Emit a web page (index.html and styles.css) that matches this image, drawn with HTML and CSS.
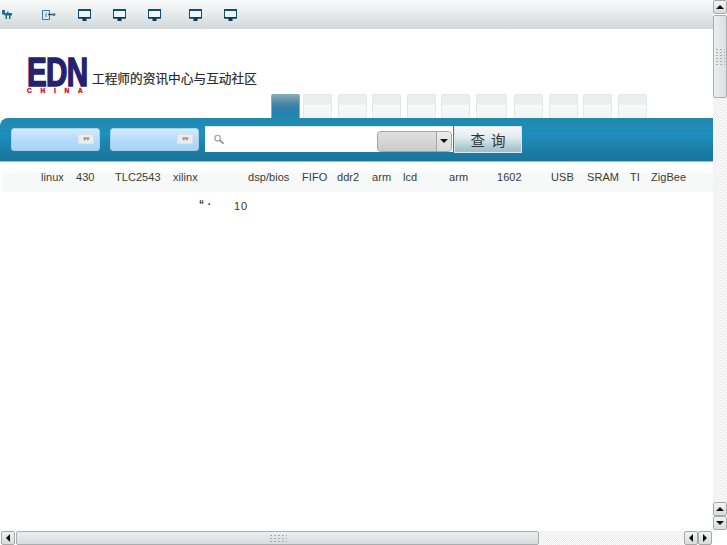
FILE: index.html
```html
<!DOCTYPE html>
<html lang="zh">
<head>
<meta charset="utf-8">
<title>EDN China</title>
<link rel="stylesheet" href="styles.css">
</head>
<body>
<svg class="defs" width="0" height="0" aria-hidden="true">
  <symbol id="monitor" viewBox="0 0 13 12">
    <path d="M0.5 0.5H12.5V9H0.5Z" fill="#f0f5f8" stroke="#0d4f78"/>
    <path d="M0 0H13V2H0Z" fill="#0d4f78"/>
    <path d="M0 8H13V9.5H8.5V12H4.5V9.5H0Z" fill="#0d3a58"/>
  </symbol>
</svg>
<div class="window">
  <div class="view">
    <div class="toolbar">
      <svg class="tool tool-first" viewBox="0 0 10 9"><path d="M0 0H3V3H5V1.5H6.5V3H10V5.5H8.5V9H7V5.5H5V9H3.5V5.5H2.5V4.5H0Z" fill="#1f6a8e"/></svg>
      <svg class="tool tool-door" viewBox="0 0 14 10"><path d="M0.5 0.5H7.5V9.5H0.5Z" fill="#dfe9f2" stroke="#3b78ad"/><path d="M3 3H5V7H3Z" fill="#8fb4d2"/><path d="M6 4.5H11" stroke="#33546e" stroke-width="1.4"/><circle cx="12" cy="4.5" r="1.6" fill="#4a7c9e"/></svg>
      <svg class="tool tool-pc" viewBox="0 0 13 12"><use href="#monitor"/></svg>
      <svg class="tool tool-pc" viewBox="0 0 13 12"><use href="#monitor"/></svg>
      <svg class="tool tool-pc" viewBox="0 0 13 12"><use href="#monitor"/></svg>
      <svg class="tool tool-pc tool-far" viewBox="0 0 13 12"><use href="#monitor"/></svg>
      <svg class="tool tool-pc" viewBox="0 0 13 12"><use href="#monitor"/></svg>
    </div>
    <div class="masthead">
      <div class="brand">
        <div class="logo">
          <span class="logo-edn">EDN</span>
          <span class="logo-china">CHINA</span>
        </div>
        <span class="slogan">工程师的资讯中心与互动社区</span>
      </div>
      <div class="tabs">
        <span class="tab tab-active"></span>
        <span class="tab"></span>
        <span class="tab"></span>
        <span class="tab"></span>
        <span class="tab"></span>
        <span class="tab"></span>
        <span class="tab tab-wide"></span>
        <span class="tab"></span>
        <span class="tab"></span>
        <span class="tab"></span>
        <span class="tab"></span>
      </div>
    </div>
    <div class="searchbar">
      <div class="pick"><span class="pick-arrows">▾▾</span></div>
      <div class="pick"><span class="pick-arrows">▾▾</span></div>
      <div class="field">
        <svg class="lens" viewBox="0 0 12 12"><circle cx="4.5" cy="4.5" r="3" fill="#fff" stroke="#a4a8aa" stroke-width="1.4"/><path d="M7 7L11 10.5" stroke="#8b8f92" stroke-width="2"/></svg>
        <div class="combo"><span class="combo-btn"><i class="tri-down"></i></span></div>
      </div>
      <button class="go" type="button">查 询</button>
    </div>
    <div class="keywords">
      <span>linux</span><span>430</span><span>TLC2543</span><span>xilinx</span><span>dsp/bios</span><span>FIFO</span><span>ddr2</span><span>arm</span><span>lcd</span><span>arm</span><span>1602</span><span>USB</span><span>SRAM</span><span>TI</span><span>ZigBee</span>
    </div>
    <div class="result"><span class="marks">“ ·</span><span class="count">10</span></div>
  </div>
  <div class="vbar">
    <span class="sbtn"><i class="tri-up"></i></span>
    <span class="vthumb"><span class="grip grip-v"></span></span>
    <span class="vtrough"></span>
    <span class="sbtn"><i class="tri-up"></i></span>
    <span class="sbtn"><i class="tri-down"></i></span>
  </div>
  <div class="hbar">
    <span class="sbtn"><i class="tri-left"></i></span>
    <span class="hthumb"><span class="grip grip-h"></span></span>
    <span class="htrough"></span>
    <span class="sbtn"><i class="tri-left"></i></span>
    <span class="sbtn"><i class="tri-right"></i></span>
  </div>
  <div class="corner"></div>
</div>
</body>
</html>
```
FILE: styles.css
```css
* { box-sizing: border-box; }
html, body { margin: 0; padding: 0; background: #fff; overflow: hidden; }
body { font-family: "Liberation Sans", "Noto Sans CJK SC", sans-serif; color: #333; }
.defs { position: absolute; }

.window {
  width: 727px; height: 545px;
  display: grid;
  grid-template-columns: 713px 14px;
  grid-template-rows: 530px 15px;
}
.view { overflow: hidden; background: #fff; }

.toolbar {
  height: 29px;
  display: flex; align-items: center;
  padding: 0 0 0 2px;
  background: linear-gradient(#f7f9f9 0, #eff2f2 30%, #dde2e3 70%, #d3d9da 100%);
}
.tool { display: block; flex: none; }
.tool-first { width: 10px; height: 9px; }
.tool-door { width: 14px; height: 10px; margin-left: 30px; }
.tool-pc { width: 13px; height: 12px; margin-left: 22px; }
.tool-far { margin-left: 28px; }

.masthead { height: 89px; position: relative; }
.brand { display: flex; align-items: flex-end; padding: 29px 0 0 27px; }
.logo { width: 60px; flex: none; display: flex; flex-direction: column; }
.logo-edn {
  height: 29px; font: 700 40px/29px "Liberation Sans", sans-serif;
  color: #27206a; letter-spacing: -1px; -webkit-text-stroke: 1.5px #27206a;
  transform: scaleX(.74); transform-origin: left center; white-space: nowrap;
}
.logo-china {
  height: 7px; font: 700 6.5px/7px "Liberation Sans", sans-serif;
  color: #d8102e; letter-spacing: 8.8px; -webkit-text-stroke: .4px #d8102e; white-space: nowrap;
}
.slogan {
  margin-left: 5px; margin-bottom: 9px;
  font: 12.7px/15px "Noto Sans CJK SC", sans-serif; color: #2a2a2a; -webkit-text-stroke: .2px #2a2a2a; white-space: nowrap;
}
.tabs { position: absolute; left: 271px; bottom: 0; display: flex; gap: 5.6px; height: 24px; }
.tab {
  width: 29px; height: 24px;
  border: 1px solid #e4e8e8; border-bottom: 0; border-radius: 2px 2px 0 0;
  background: linear-gradient(#eceeee 0, #eceeee 40%, #f8faf9 45%, #f1f4f3 100%);
}
.tab-active {
  width: 29px; border-color: #7fb0c6;
  background: linear-gradient(#86a9ba 0, #4f89a8 35%, #2d80aa 60%, #1f85b8 100%);
  margin-right: -2.6px;
}
.tab-wide { width: 31px; margin-right: 1.5px; }

.searchbar {
  height: 44px;
  display: flex; align-items: center;
  padding: 0 0 1px 11px;
  background: linear-gradient(#2088ad 0, #1f8fbd 35%, #1b7ea6 75%, #19749c 100%);
  border-top-left-radius: 8px;
  border-bottom: 1px solid #a8b8bf;
}
.pick {
  width: 89px; height: 23px; flex: none; margin-right: 10px;
  display: flex; align-items: center; justify-content: flex-end; padding-right: 5px;
  border-radius: 3px;
  background: linear-gradient(#d3ebfd 0, #b4dbfa 55%, #a5d3f6 100%);
  border: 1px solid #a9cfe2;
}
.pick + .pick { margin-right: 6px; }
.pick-arrows {
  width: 16px; height: 10px; border-radius: 2px; background: #eceeee;
  font-size: 7px; line-height: 10px; text-align: center; color: #8a9094; letter-spacing: -1px;
  box-shadow: inset 0 0 0 1px #dfe3e4;
}
.field {
  width: 248px; height: 26px; flex: none;
  display: flex; align-items: center; justify-content: space-between;
  padding: 3px 1px 0 8px;
  background: #fff; border-top: 1px solid #dfe6ea;
}
.lens { width: 12px; height: 11px; flex: none; margin-top: -3px; }
.combo {
  width: 75px; height: 21px;
  display: flex; justify-content: flex-end;
  border: 1px solid #a4a4a4; border-radius: 4px;
  background: linear-gradient(#dfdfdf, #d4d4d4 60%, #cbcbcb);
}
.combo-btn { width: 15px; display: flex; align-items: center; justify-content: center; border-left: 1px solid #a4a4a4; background: linear-gradient(#ececec, #dadada); border-radius: 0 3px 3px 0; }
.go {
  width: 68px; height: 27px; flex: none; margin-left: 1px; padding: 0;
  border: 1px solid #dce7ea; border-radius: 0;
  background: linear-gradient(#f7f9f9 0, #e3ecee 40%, #a9c8d3 85%, #9dc1ce 100%);
  font: 14.5px/25px "Noto Sans CJK SC", sans-serif; color: #333; word-spacing: 3px;
}

.keywords {
  margin: 1px 0 0 2px; height: 29px; padding: 0 0 0 39px;
  display: grid; align-items: center;
  grid-template-columns: 35px 39px 58px 75px 54px 35px 35px 31px 46px 48px 54px 36px 43px 21px auto;
  background: linear-gradient(#fff 0, #fff 9px, #f6f9f8 10px);
  font-size: 11px; line-height: 13px; color: #3a3a3a; letter-spacing: .05px;
}
.result {
  display: flex; align-items: baseline;
  padding: 8px 0 0 199px;
  font-size: 11px; line-height: 13px; color: #333;
}
.marks { width: 35px; white-space: pre; word-spacing: 1px; font-size: 10px; font-weight: 700; color: #222; position: relative; top: -2px; }
.count { letter-spacing: 1px; }

.vbar { display: flex; flex-direction: column; }
.sbtn {
  width: 14px; height: 14px; flex: none;
  display: flex; align-items: center; justify-content: center;
  border: 1px solid #a9a9a9; border-radius: 2px;
  background: linear-gradient(#f2f3f3, #d9dcdc);
}
.vthumb, .hthumb {
  display: flex; align-items: center; justify-content: center;
  border: 1px solid #a9adad; border-radius: 2px; flex: none;
}
.vthumb { height: 83px; margin-top: 1px; background: linear-gradient(90deg, #eceef0, #dcdfe2); }
.hthumb { width: 523px; height: 14px; margin-left: 1px; background: linear-gradient(#eceef0, #d8dbdd); }
.vtrough, .htrough {
  flex: 1;
  background-color: #f6f6f6;
  background-image: repeating-conic-gradient(#ececec 0 25%, #fcfcfc 0 50%);
  background-size: 2px 2px;
}
.grip {
  display: block;
  background-image: radial-gradient(circle, #a8acae 0, #a8acae 1px, transparent 1.1px);
  background-size: 4px 3px;
}
.grip-v { width: 10px; height: 18px; }
.grip-h { width: 18px; height: 9px; }
.hbar { display: flex; grid-column: 1; height: 14px; padding: 0 1px; margin-top: 1px; }
.corner { background: #fff; }

.tri-up, .tri-down, .tri-left, .tri-right { display: block; width: 0; height: 0; border: 4px solid transparent; }
.tri-up { border-bottom-color: #111; border-top-width: 0; }
.tri-down { border-top-color: #111; border-bottom-width: 0; }
.tri-left { border-right-color: #111; border-left-width: 0; }
.tri-right { border-left-color: #111; border-right-width: 0; }
```
